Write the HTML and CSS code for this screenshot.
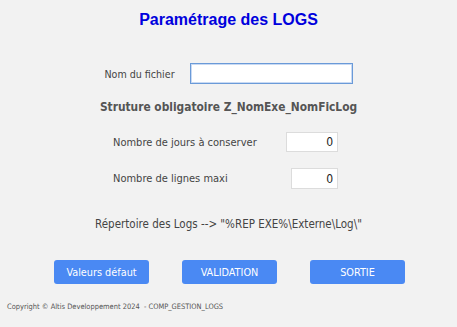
FILE: index.html
```html
<!DOCTYPE html>
<html lang="fr">
<head>
    <meta charset="UTF-8">
    <title>Paramétrage des LOGS</title>
    <link rel="stylesheet" href="styles.css">
</head>
<body>

    <h1>Paramétrage des LOGS</h1>

    <div class="row row-file">
        <label for="fichier">Nom du fichier</label>
        <input type="text" id="fichier" class="file-input" autofocus>
    </div>

    <p class="info info-bold">Struture obligatoire Z_NomExe_NomFicLog</p>

    <div class="row row-num row-jours">
        <label for="jours">Nombre de jours à conserver</label>
        <input type="text" id="jours" class="num-input num-jours" value="0">
    </div>

    <div class="row row-num row-lignes">
        <label for="lignes">Nombre de lignes maxi</label>
        <input type="text" id="lignes" class="num-input num-lignes" value="0">
    </div>

    <p class="info info-rep">Répertoire des Logs --&gt; "%REP EXE%\Externe\Log\"</p>

    <div class="buttons">
        <button>Valeurs défaut</button>
        <button>VALIDATION</button>
        <button>SORTIE</button>
    </div>

    <div class="footer">Copyright © Altis Developpement 2024 &nbsp;- COMP_GESTION_LOGS</div>

    <script src="script.js"></script>

</body>
</html>
```

FILE: styles.css
```css
body {
    margin: 0;
    background-color: #f2f2f2;
    font-family: "DejaVu Sans Condensed", "DejaVu Sans", sans-serif;
    font-size: 11px;
    color: #444;
}
h1 {
    margin: 10px 0 0;
    font-family: "Liberation Sans", Arial, sans-serif;
    font-size: 16px;
    line-height: 20px;
    color: #0000dd;
    text-align: center;
}
/* Rows of label + input */
.row {
    display: flex;
    align-items: center;
}
.row-file {
    margin-top: 33px;
    justify-content: center;
    gap: 15px;
    height: 21px;
}
.row-file label { font-size: 10.6px; }
.file-input {
    box-sizing: border-box;
    width: 163px;
    height: 21px;
    border: 1px solid #6a9ad8;
    box-shadow: 0 0 0 1px #c9daf3 inset;
    outline: none;
    background: #fff;
    padding: 0 4px;
    font-family: inherit;
    font-size: 12px;
    caret-color: #000;
}
.row-num {
    margin-left: 113px;
    width: 225px;
    justify-content: space-between;
}
.row-jours { margin-top: 17px; height: 20px; }
.row-lignes { margin-top: 16px; height: 21px; }
.num-input {
    box-sizing: border-box;
    height: 100%;
    border: 1px solid #dcdcdc;
    background: #fff;
    padding: 0 4px;
    text-align: right;
    font-family: inherit;
    font-size: 12px;
    color: #222;
    outline: none;
}
.num-jours { width: 52px; }
.num-lignes { width: 47px; }
/* Info lines */
.info {
    margin: 0;
    line-height: 16px;
    text-align: center;
}
.info-bold {
    margin-top: 15px;
    font-size: 11.85px;
    font-weight: bold;
    color: #555;
}
.info-rep {
    margin-top: 27px;
    font-size: 11.5px;
    color: #444;
}
/* Buttons */
.buttons {
    display: flex;
    gap: 33px;
    margin: 28px 0 0 54px;
}
button {
    width: 95px;
    height: 24px;
    border: none;
    border-radius: 3px;
    background-color: #4a89f3;
    color: #fff;
    font-family: inherit;
    font-size: 10.8px;
    cursor: pointer;
}
.footer {
    margin: 18px 0 0 7px;
    font-size: 7.45px;
    line-height: 10px;
    color: #555;
}
```

FILE: script.js
```js
document.getElementById('fichier').focus();
```
